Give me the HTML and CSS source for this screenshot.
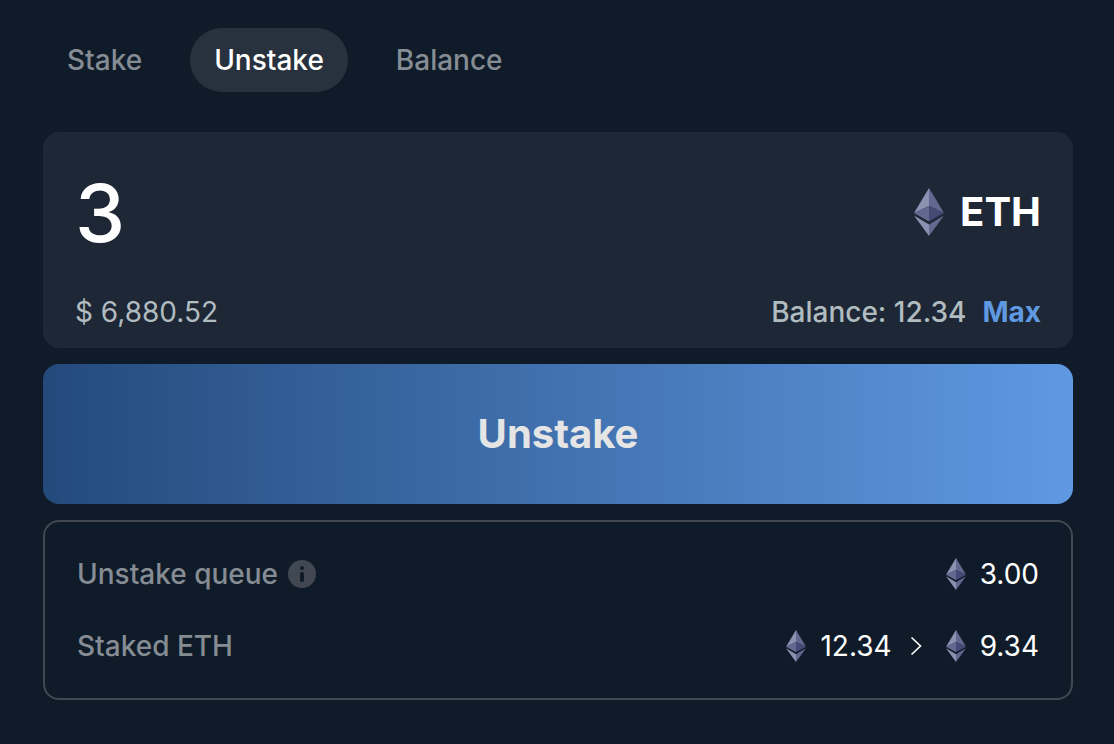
FILE: index.html
```html
<!DOCTYPE html>
<html lang="en">
<head>
    <meta charset="UTF-8">
    <meta name="viewport" content="width=device-width, initial-scale=1.0">
    <title>Unstake ETH</title>
    <link rel="stylesheet" href="styles.css">
</head>
<body>
    <!-- shared icon shapes -->
    <svg class="sprite" aria-hidden="true">
        <symbol id="eth" viewBox="0 0 30 48">
            <path fill="#8a92b2" d="M15 0 0 25 15 18z"/>
            <path fill="#62688f" d="M15 0 30 25 15 18z"/>
            <path fill="#62688f" d="M0 25 15 18V33.500z"/>
            <path fill="#454a75" d="M30 25 15 18V33.500z"/>
            <path fill="#8a92b2" d="M0 27.500 15 36.500V48z"/>
            <path fill="#62688f" d="M30 27.500 15 36.500V48z"/>
        </symbol>
    </svg>

    <main class="widget">
        <nav class="tabs">
            <button type="button" class="tab">Stake</button>
            <button type="button" class="tab active">Unstake</button>
            <button type="button" class="tab">Balance</button>
        </nav>

        <form class="form">
            <div class="card">
                <div class="row">
                    <input class="amount" type="text" inputmode="decimal" aria-label="Amount" value="3">
                    <div class="token">
                        <svg class="token-icon" aria-hidden="true"><use href="#eth"/></svg>
                        <span>ETH</span>
                    </div>
                </div>
                <div class="row">
                    <span>$ 6,880.52</span>
                    <div class="balance">
                        <span>Balance: 12.34</span>
                        <button type="button" class="max">Max</button>
                    </div>
                </div>
            </div>

            <button type="button" class="submit">Unstake</button>

            <dl class="details">
                <div class="row">
                    <dt class="label">
                        Unstake queue
                        <svg class="info" viewBox="0 0 28 28" aria-hidden="true">
                            <circle cx="14" cy="14" r="14" fill="#414851"/>
                            <circle cx="14" cy="8" r="2" fill="#0f1b28"/>
                            <rect x="12" y="12" width="4" height="10" rx="2" fill="#0f1b28"/>
                        </svg>
                    </dt>
                    <dd class="values">
                        <span class="value"><svg class="icon" aria-hidden="true"><use href="#eth"/></svg>3.00</span>
                    </dd>
                </div>
                <div class="row">
                    <dt class="label">Staked ETH</dt>
                    <dd class="values">
                        <span class="value"><svg class="icon" aria-hidden="true"><use href="#eth"/></svg>12.34</span>
                        <svg class="arrow" viewBox="0 0 18 20" aria-hidden="true">
                            <path d="M1.500 1.500 10.500 10 1.500 18.500" fill="none" stroke="#fff" stroke-width="1.600"/>
                        </svg>
                        <span class="value"><svg class="icon" aria-hidden="true"><use href="#eth"/></svg>9.34</span>
                    </dd>
                </div>
            </dl>
        </form>
    </main>
</body>
</html>
```
FILE: styles.css
```css
* {
    box-sizing: border-box;
}
body {
    margin: 0;
    background: #0f1b28;
    color: #fff;
    font-family: Inter, "Liberation Sans", sans-serif;
    font-size: 28px;
    line-height: 40px;
}
button, input {
    padding: 0;
    border: none;
    background: none;
    color: inherit;
    font: inherit;
}
button {
    cursor: pointer;
}
.sprite {
    display: none;
}
.widget {
    padding: 28px 41px 44px 43px;
}
.tabs {
    display: flex;
    gap: 24px;
    margin-bottom: 40px;
}
.tab {
    height: 64px;
    padding: 0 24px;
    border-radius: 32px;
    color: #868c94;
    font-weight: 500;
}
.tab.active {
    background: #28323e;
    color: #fff;
}
.form {
    display: flex;
    flex-direction: column;
    gap: 16px;
}
.row {
    display: flex;
    justify-content: space-between;
    align-items: center;
}
.card {
    display: flex;
    flex-direction: column;
    gap: 32px;
    padding: 32px 32px 16px;
    border-radius: 16px;
    background: #1e2735;
    color: #b0bcc0;
}
.amount {
    flex: 1;
    min-width: 0;
    height: 96px;
    outline: none;
    color: #fff;
    font-size: 80px;
    font-weight: 500;
}
.token {
    display: flex;
    align-items: center;
    gap: 16px;
    color: #fff;
    font-size: 40px;
    font-weight: 700;
}
.token-icon {
    width: 30px;
    height: 48px;
}
.balance {
    display: flex;
    gap: 16px;
    font-weight: 500;
}
.max {
    color: #5f99e2;
    font-weight: 700;
}
.submit {
    height: 140px;
    border-radius: 16px;
    background: linear-gradient(90deg, #244a7c, #5f99e2);
    color: #e5e5e5;
    font-size: 40px;
    font-weight: 700;
}
.details {
    display: flex;
    flex-direction: column;
    gap: 32px;
    margin: 0;
    padding: 32px;
    border: 2px solid #414851;
    border-radius: 16px;
}
.label {
    display: flex;
    align-items: center;
    gap: 10px;
    color: #868c94;
    font-weight: 500;
}
.info {
    width: 28px;
    height: 28px;
}
.values {
    display: flex;
    align-items: center;
    gap: 18px;
    margin: 0;
}
.value {
    display: flex;
    align-items: center;
    gap: 14px;
}
.icon {
    width: 20px;
    height: 32px;
}
.arrow {
    width: 18px;
    height: 20px;
}
```
